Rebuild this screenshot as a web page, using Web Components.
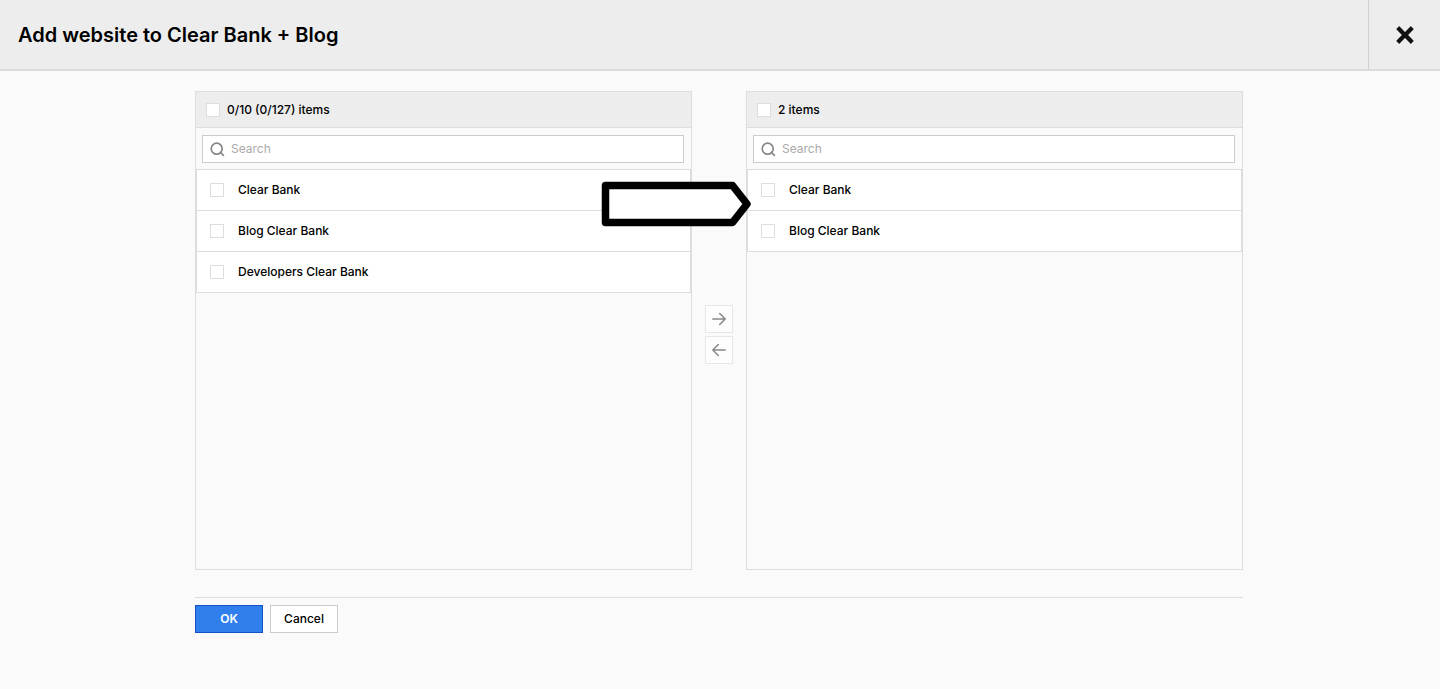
<!DOCTYPE html>
<html lang="en">
<head>
<meta charset="utf-8">
<meta name="viewport" content="width=device-width, initial-scale=1">
<title>Add website</title>
<style>
  body { margin: 0; background: #fafafa; color: #000; font: 500 12px/16px Inter, "Liberation Sans", sans-serif; }
</style>
</head>
<body>
<website-dialog heading="Add website to Clear Bank + Blog">
  <transfer-panel heading="0/10 (0/127) items" slot="source">
    <transfer-item>Clear Bank</transfer-item>
    <transfer-item>Blog Clear Bank</transfer-item>
    <transfer-item>Developers Clear Bank</transfer-item>
  </transfer-panel>
  <transfer-panel heading="2 items" slot="target">
    <transfer-item>Clear Bank</transfer-item>
    <transfer-item>Blog Clear Bank</transfer-item>
  </transfer-panel>
</website-dialog>
<script>
const define = (name, html, setup) => {
  const template = document.createElement('template');
  template.innerHTML = '<style>*{box-sizing:border-box}</style>' + html;
  customElements.define(name, class extends HTMLElement {
    constructor() {
      super();
      this.attachShadow({ mode: 'open' }).append(template.content.cloneNode(true));
    }
    connectedCallback() { if (setup) setup(this, this.shadowRoot); }
  });
};

const checkbox = `
  input[type=checkbox] { appearance: none; flex: none; width: 14px; height: 14px; margin: 0; background: #fff; border: 1px solid #ddd; }
  input[type=checkbox]:checked { background: #317fed; }`;

define('transfer-item', `
  <style>
    :host { display: block; background: #fff; border: solid #ddd; border-width: 0 1px 1px; }
    label { display: flex; align-items: center; gap: 14px; height: 40px; padding: 0 13px; }
    ${checkbox}
  </style>
  <label><input type="checkbox"><span><slot></slot></span></label>`);

define('transfer-panel', `
  <style>
    :host { display: block; min-height: 479px; box-sizing: border-box; border: 1px solid #ddd; }
    .head { display: flex; align-items: center; gap: 7px; height: 36px; padding: 0 10px; background: #ededed; border-bottom: 1px solid #ddd; }
    .search { display: flex; align-items: center; gap: 6px; height: 28px; margin: 7px 7px 6px 6px; padding: 0 7px; background: #fff; border: 1px solid #ccc; }
    .search svg { flex: none; width: 15px; height: 15px; }
    .search input { flex: 1; min-width: 0; border: 0; padding: 0; outline: 0; background: none; font: 400 12px/16px Inter, "Liberation Sans", sans-serif; color: inherit; }
    .search input::placeholder { color: #aaa; opacity: 1; }
    .list { border-top: 1px solid #ddd; }
    ${checkbox}
  </style>
  <label class="head"><input type="checkbox"><span class="title"></span></label>
  <label class="search">
    <svg viewBox="0 0 15 15" fill="none" stroke="#888" stroke-width="1.7" stroke-linecap="round" aria-hidden="true"><circle cx="6.7" cy="6.7" r="5.5"/><path d="M10.4 10.4 13.4 13.4"/></svg>
    <input type="text" placeholder="Search" aria-label="Search">
  </label>
  <div class="list"><slot></slot></div>`,
  (host, root) => { root.querySelector('.title').textContent = host.getAttribute('heading'); });

define('transfer-actions', `
  <style>
    :host { display: flex; flex-direction: column; justify-content: center; align-items: center; gap: 3px; padding-top: 7px; }
    button { display: grid; place-items: center; width: 28px; height: 28px; padding: 0; background: #fdfdfd; border: 1px solid #e7e7e7; }
    svg { width: 14px; height: 14px; fill: none; stroke: #888; stroke-width: 1.5; stroke-linecap: round; stroke-linejoin: round; }
  </style>
  <button type="button" aria-label="Move right"><svg viewBox="0 0 14 14"><path d="M.8 7h12.4M7.7 1.5 13.2 7 7.7 12.5"/></svg></button>
  <button type="button" aria-label="Move left"><svg viewBox="0 0 14 14"><path d="M13.2 7H.8M6.3 1.5.8 7l5.5 5.5"/></svg></button>`);

define('action-pointer', `
  <style>
    :host { display: block; pointer-events: none; }
    svg { display: block; width: 150px; height: 46px; }
  </style>
  <svg viewBox="0 0 150 46" aria-hidden="true"><path d="M4.5 4.5H131.500L146 23 131.500 41.500H4.500Z" fill="#fff" stroke="#000" stroke-width="7.500" stroke-linejoin="round"/></svg>`);

define('website-dialog', `
  <style>
    :host { display: block; }
    header { display: flex; height: 71px; background: #ededed; border-bottom: 2px solid #dcdcdc; }
    h1 { flex: 1; margin: 0; padding: 0 18px; align-self: center; font-size: 20px; line-height: 28px; font-weight: 600; }
    .close { display: grid; place-items: center; width: 72px; padding: 0; background: none; border: 0; border-left: 1px solid #d0d0d0; }
    .close svg { width: 18px; height: 18px; }
    main { max-width: 1050px; margin: 0 auto; padding: 20px 2px 20px 0; box-sizing: border-box; }
    .transfer { position: relative; display: grid; grid-template-columns: minmax(0, 1fr) 54px minmax(0, 1fr); }
    action-pointer { position: absolute; top: 90px; left: calc(50% - 118px); }
    footer { display: flex; gap: 7px; margin-top: 27px; padding-top: 7px; border-top: 1px solid #ddd; }
    footer button { width: 68px; height: 28px; padding: 0; background: #fff; border: 1px solid #ccc; color: #000; font: inherit; }
    footer .ok { background: #317fed; border-color: #1450c8; color: #fff; font-weight: 600; }
  </style>
  <header>
    <h1></h1>
    <button class="close" type="button" aria-label="Close"><svg viewBox="0 0 18 18"><path d="M3.200 1 9 6.800 14.800 1 17 3.200 11.200 9 17 14.800 14.800 17 9 11.200 3.200 17 1 14.800 6.800 9 1 3.200Z" fill="#111" stroke="#111" stroke-width="1.200" stroke-linejoin="round"/></svg></button>
  </header>
  <main>
    <div class="transfer">
      <slot name="source"></slot>
      <transfer-actions></transfer-actions>
      <slot name="target"></slot>
      <action-pointer></action-pointer>
    </div>
    <footer><button class="ok" type="button">OK</button><button type="button">Cancel</button></footer>
  </main>`,
  (host, root) => { root.querySelector('h1').textContent = host.getAttribute('heading'); });
</script>
</body>
</html>
